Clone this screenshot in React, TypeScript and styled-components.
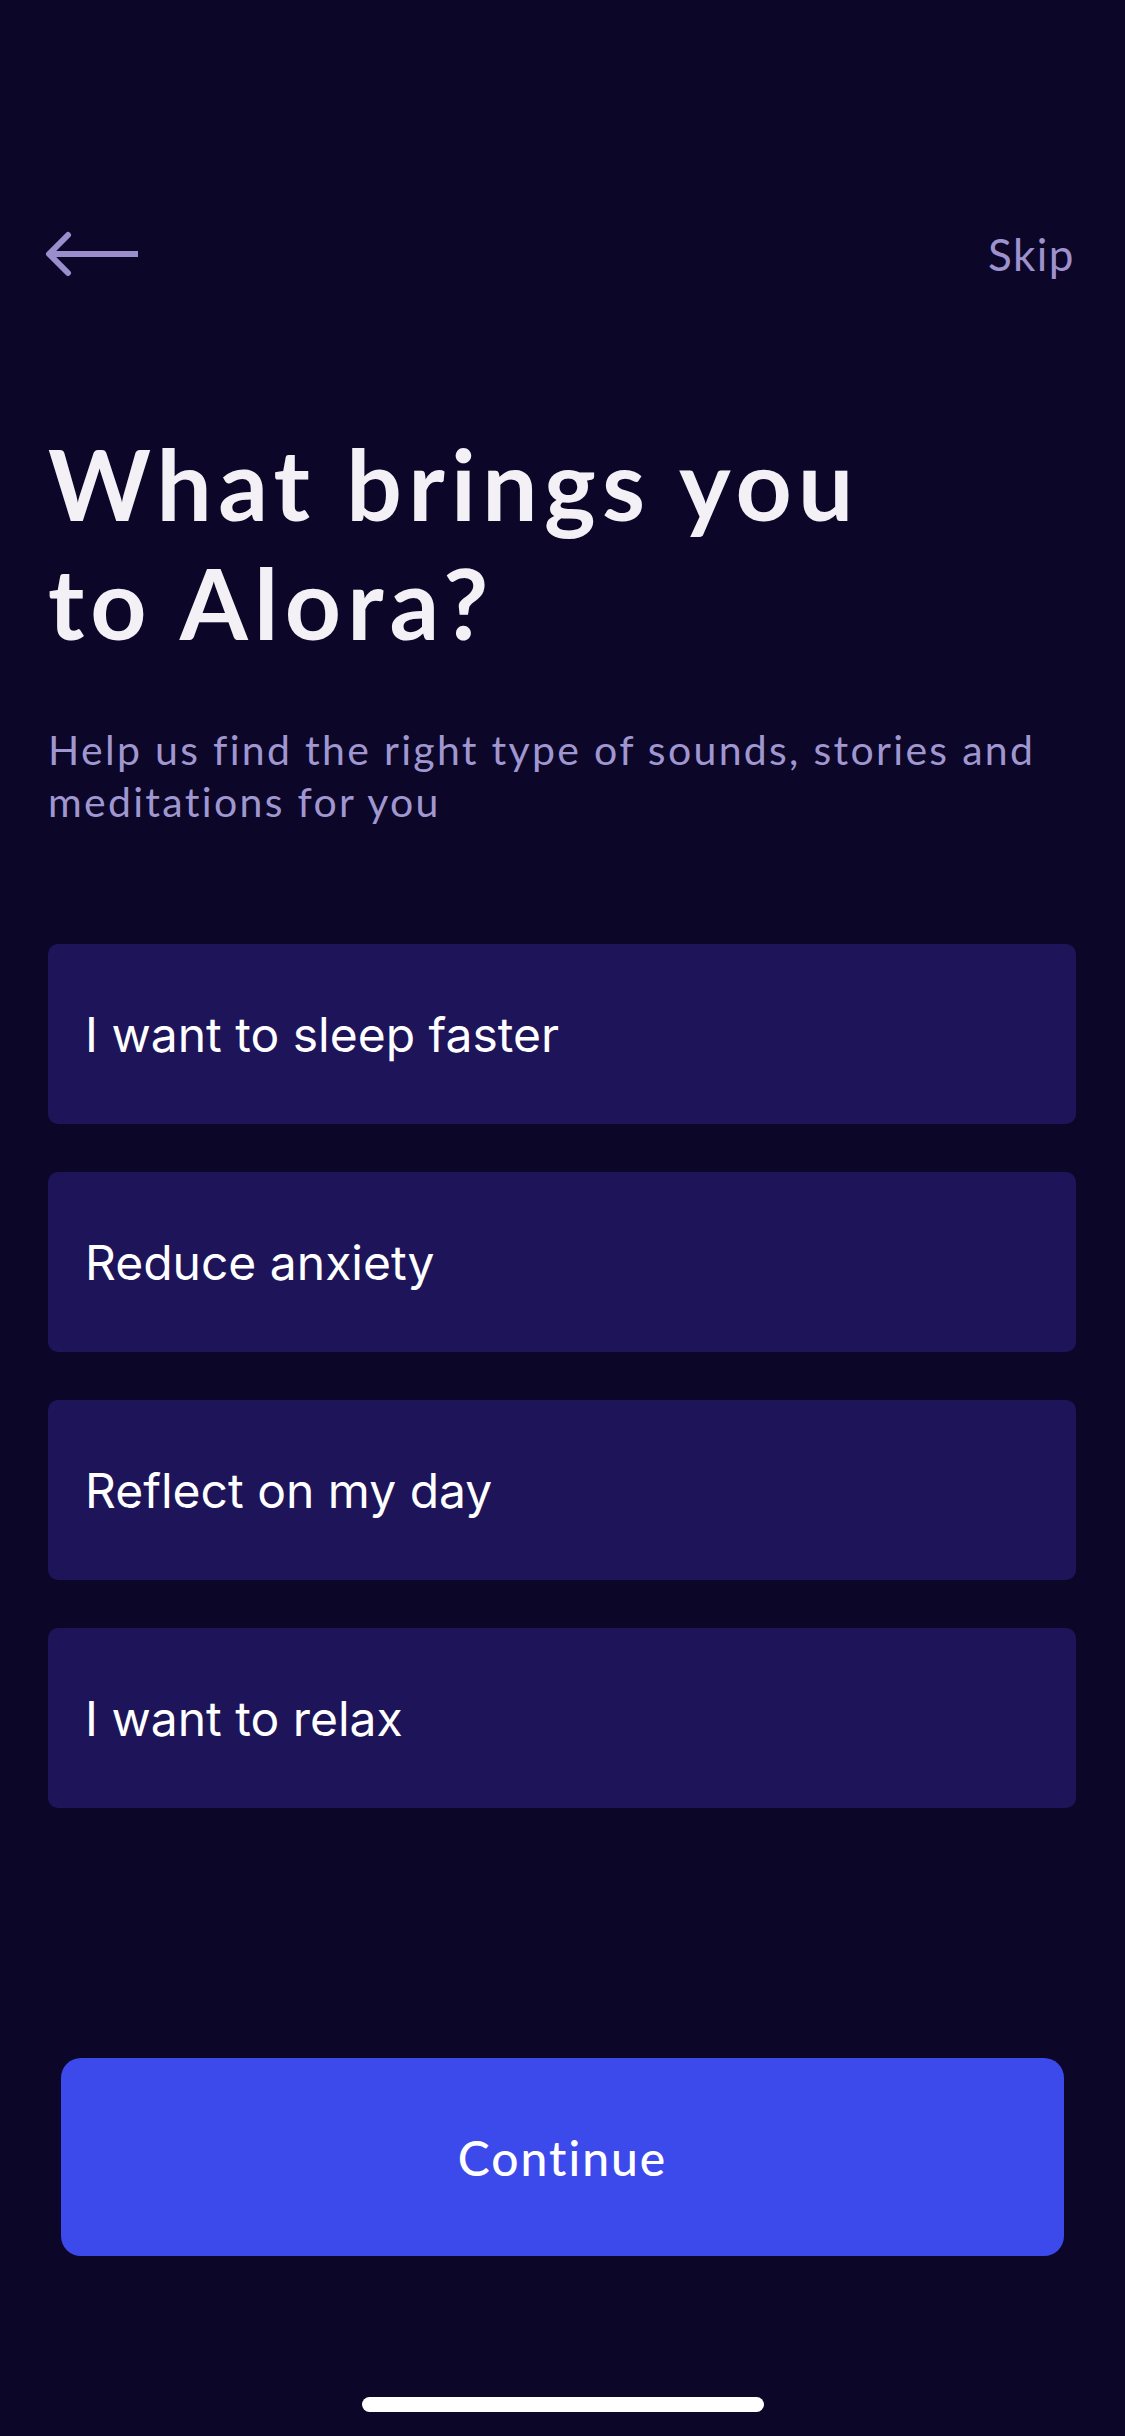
import React from "react";
import styled, { createGlobalStyle } from "styled-components";

const GlobalStyle = createGlobalStyle`
  html, body {
    margin: 0;
    padding: 0;
    background-color: #0c0629;
  }
  * {
    box-sizing: border-box;
  }
`;

const goals = [
  "I want to sleep faster",
  "Reduce anxiety",
  "Reflect on my day",
  "I want to relax",
];

const BackArrow = () => (
  <svg width="96" height="48" viewBox="0 0 96 48" fill="none">
    <path d="M93 24H4" stroke="#9a8fcc" strokeWidth="6" />
    <path
      d="M23 5L4 24L23 43"
      stroke="#9a8fcc"
      strokeWidth="6"
      strokeLinecap="round"
      strokeLinejoin="round"
    />
  </svg>
);

const App = () => {
  return (
    <Screen>
      <GlobalStyle />
      <Header>
        <BackButton>
          <BackArrow />
        </BackButton>
        <SkipLink>Skip</SkipLink>
      </Header>
      <Title>
        What brings you
        <br />
        to Alora?
      </Title>
      <Subtitle>
        Help us find the right type of sounds, stories and meditations for you
      </Subtitle>
      <OptionList>
        {goals.map((goal) => (
          <Option key={goal}>{goal}</Option>
        ))}
      </OptionList>
      <Footer>
        <ContinueBtn>Continue</ContinueBtn>
        <HomeIndicator />
      </Footer>
    </Screen>
  );
};

export default App;

const Screen = styled.div`
  width: 1125px;
  height: 2436px;
  display: flex;
  flex-direction: column;
  background-color: #0c0629;
  font-family: "Lato", "Noto Sans", sans-serif;
  overflow: hidden;
`;
const Header = styled.div`
  display: flex;
  align-items: center;
  justify-content: space-between;
  height: 60px;
  margin-top: 224px;
  padding: 0 50px 0 45px;
`;
const BackButton = styled.div`
  display: flex;
  align-items: center;
  cursor: pointer;
`;
const SkipLink = styled.div`
  font-size: 44px;
  letter-spacing: 1.5px;
  color: #9d92cc;
  cursor: pointer;
`;
const Title = styled.h1`
  margin: 140px 0 0;
  padding: 0 48px;
  font-size: 98px;
  line-height: 119px;
  letter-spacing: 6.3px;
  font-weight: 700;
  color: #f3f1f6;
`;
const Subtitle = styled.p`
  margin: 62px 0 0;
  padding: 0 48px;
  font-size: 41px;
  line-height: 52px;
  letter-spacing: 2.3px;
  color: #a096d0;
`;
const OptionList = styled.div`
  display: flex;
  flex-direction: column;
  gap: 48px;
  margin-top: 116px;
  padding: 0 49px 0 48px;
`;
const Option = styled.div`
  display: flex;
  align-items: center;
  height: 180px;
  padding: 0 37px;
  border-radius: 10px;
  background-color: #1e1459;
  color: #ffffff;
  font-family: "Inter", "Roboto", sans-serif;
  font-size: 48px;
  cursor: pointer;
`;
const Footer = styled.div`
  flex: 1;
  display: flex;
  flex-direction: column;
  align-items: center;
  justify-content: flex-end;
  padding-bottom: 24px;
`;
const ContinueBtn = styled.div`
  display: flex;
  align-items: center;
  justify-content: center;
  width: 1003px;
  height: 198px;
  border-radius: 20px;
  background-color: #3d4aeb;
  color: #ffffff;
  font-size: 48px;
  letter-spacing: 2px;
  font-weight: 500;
  cursor: pointer;
`;
const HomeIndicator = styled.div`
  width: 402px;
  height: 15px;
  margin-top: 141px;
  border-radius: 8px;
  background-color: #ffffff;
`;
